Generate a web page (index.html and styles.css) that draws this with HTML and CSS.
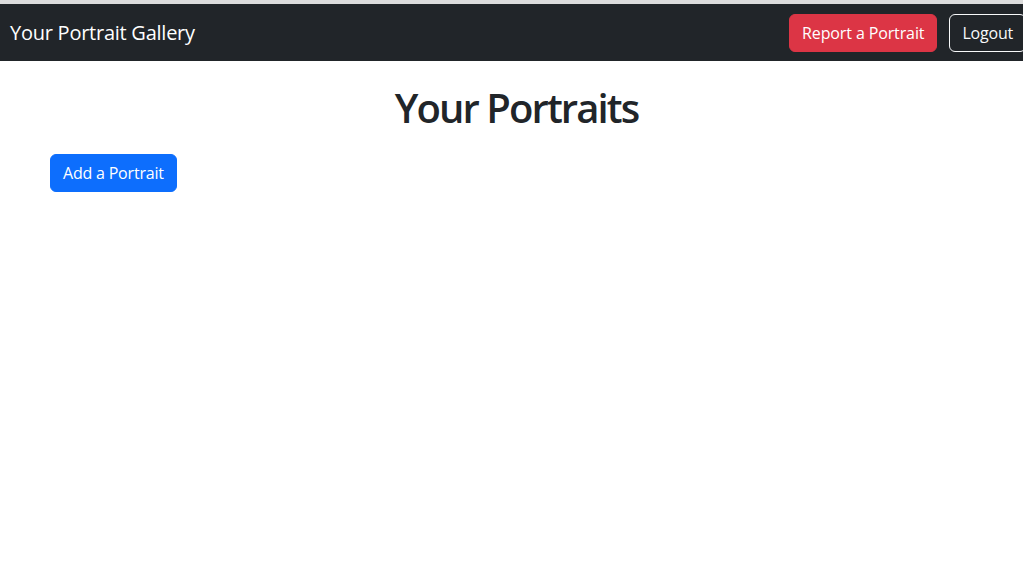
FILE: index.html
```html
<!DOCTYPE html>
<html lang="en">
<head>
<meta charset="utf-8">
<title>Your Portrait Gallery</title>
<link rel="stylesheet" href="styles.css">
</head>
<body>
<nav class="navbar">
  <a class="brand" href="#">Your Portrait Gallery</a>
  <div class="nav-actions">
    <button class="btn btn-danger">Report a Portrait</button>
    <button class="btn btn-outline-light">Logout</button>
  </div>
</nav>
<main class="content">
  <h1 class="title">Your Portraits</h1>
  <div class="actions">
    <button class="btn btn-primary">Add a Portrait</button>
  </div>
</main>
</body>
</html>
```

FILE: styles.css
```css
html, body {
  margin: 0;
  padding: 0;
  overflow-x: hidden;
}
body {
  font-family: "Open Sans", "Noto Sans", sans-serif;
  color: #212529;
  background: #fff;
  border-top: 4px solid #dcdcdc;
}
.navbar {
  background: #212529;
  height: 57px;
  box-sizing: border-box;
  display: flex;
  align-items: center;
  justify-content: space-between;
  padding: 0 0 0 10px;
  margin-right: -3px;
}
.brand {
  color: #fff;
  text-decoration: none;
  font-size: 20px;
  line-height: 30px;
  letter-spacing: -0.25px;
}
.nav-actions {
  display: flex;
  gap: 12px;
}
.btn {
  font-family: inherit;
  font-size: 16px;
  line-height: 24px;
  padding: 6px 12px;
  border-radius: 6px;
  border: 1px solid transparent;
  cursor: pointer;
  letter-spacing: -0.2px;
}
.btn-danger {
  background: #dc3545;
  border-color: #dc3545;
  color: #fff;
  letter-spacing: -0.12px;
}
.btn-outline-light {
  background: transparent;
  border-color: #f8f9fa;
  color: #f8f9fa;
}
.btn-primary {
  background: #0d6efd;
  border-color: #0d6efd;
  color: #fff;
}
.content {
  padding: 0 50px;
}
.title {
  text-align: center;
  font-size: 40px;
  font-weight: 600;
  line-height: 48px;
  letter-spacing: -1.9px;
  margin: 23px 0 22px;
  padding-left: 10px;
}
```
